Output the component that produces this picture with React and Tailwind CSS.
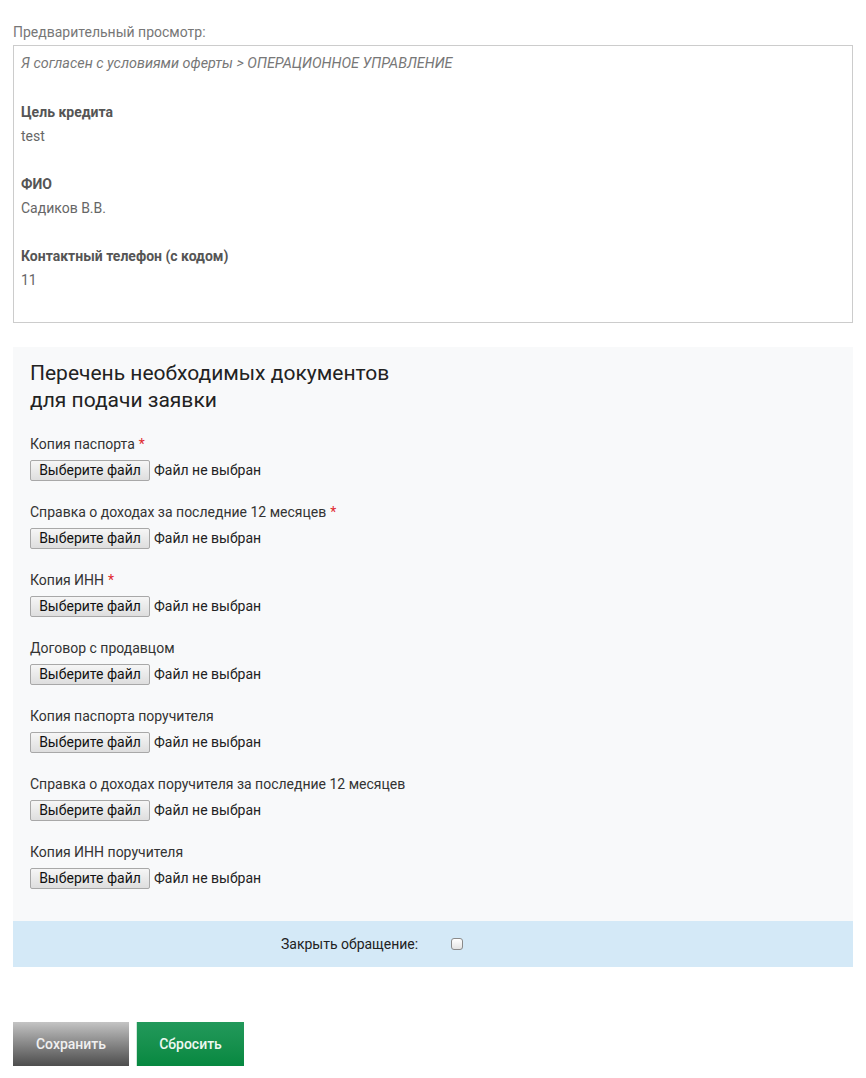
import React from "react";

const docs = [
  { label: "Копия паспорта", req: true },
  { label: "Справка о доходах за последние 12 месяцев", req: true },
  { label: "Копия ИНН", req: true },
  { label: "Договор с продавцом", req: false },
  { label: "Копия паспорта поручителя", req: false },
  { label: "Справка о доходах поручителя за последние 12 месяцев", req: false },
  { label: "Копия ИНН поручителя", req: false },
];

const fields = [
  { label: "Цель кредита", value: "test" },
  { label: "ФИО", value: "Садиков В.В." },
  { label: "Контактный телефон (с кодом)", value: "11" },
];

export default function App() {
  return (
    <div className="min-h-[1078px] w-[866px] bg-white font-['Roboto',sans-serif]">
      <div className="px-[13px] pt-[23px]">
        <div className="text-[14px] leading-[19px] text-[#777]">Предварительный просмотр:</div>
        <div className="mt-[3px] h-[278px] border border-[#ccc] px-[7px] pt-[6px] text-[14px] text-[#666]">
          <div className="text-[14.4px] leading-[24px] italic text-[#777]">
            Я согласен с условиями оферты &gt; ОПЕРАЦИОННОЕ УПРАВЛЕНИЕ
          </div>
          {fields.map((f) => (
            <div key={f.label} className="mt-[24px]">
              <div className="font-bold leading-[24px] text-[#555]">{f.label}</div>
              <div className="leading-[24px]">{f.value}</div>
            </div>
          ))}
        </div>

        <div className="mt-[24px] bg-[#f8f9fa]">
          <div className="px-[17px] pt-[13px] pb-[32px]">
            <h2 className="text-[21px] leading-[27px] text-[#222] font-normal">
              Перечень необходимых документов
              <br />
              для подачи заявки
            </h2>
            <div className="mt-[20px] flex flex-col gap-[21px]">
              {docs.map((d) => (
                <div key={d.label} className="flex flex-col">
                  <div className="text-[14px] leading-[20px] text-[#333]">
                    {d.label}
                    {d.req && <span className="ml-[4px] text-[#e0282e]">*</span>}
                  </div>
                  <div className="mt-[6px] flex items-center text-[14px] text-[#222]">
                    <span className="flex h-[21px] w-[120px] items-center justify-center rounded-[2px] border border-[#a8a8a8] bg-gradient-to-b from-[#f6f6f6] to-[#dedede] text-[14px] text-[#111]">
                      Выберите файл
                    </span>
                    <span className="ml-[4px]">Файл не выбран</span>
                  </div>
                </div>
              ))}
            </div>
          </div>
          <div className="flex h-[46px] items-center bg-[#d4e9f7]">
            <span className="ml-[268px] text-[14px] text-[#222]">Закрыть обращение:</span>
            <span className="ml-[33px] h-[12px] w-[12px] rounded-[3px] border border-[#8a8a8a] bg-gradient-to-b from-[#fff] to-[#e3e3e3]"></span>
          </div>
        </div>

        <div className="mt-[55px] flex gap-[7px]">
          <button className="h-[44px] w-[116px] bg-gradient-to-b from-[#c4c4c4] to-[#4e4e4e] text-[14px] font-medium text-[#f0f0f0]">
            Сохранить
          </button>
          <button className="h-[44px] w-[108px] border-l border-[#cfe8da] bg-gradient-to-b from-[#22995b] to-[#068840] text-[14px] font-medium text-[#eef8f2]">
            Сбросить
          </button>
        </div>
      </div>
    </div>
  );
}
